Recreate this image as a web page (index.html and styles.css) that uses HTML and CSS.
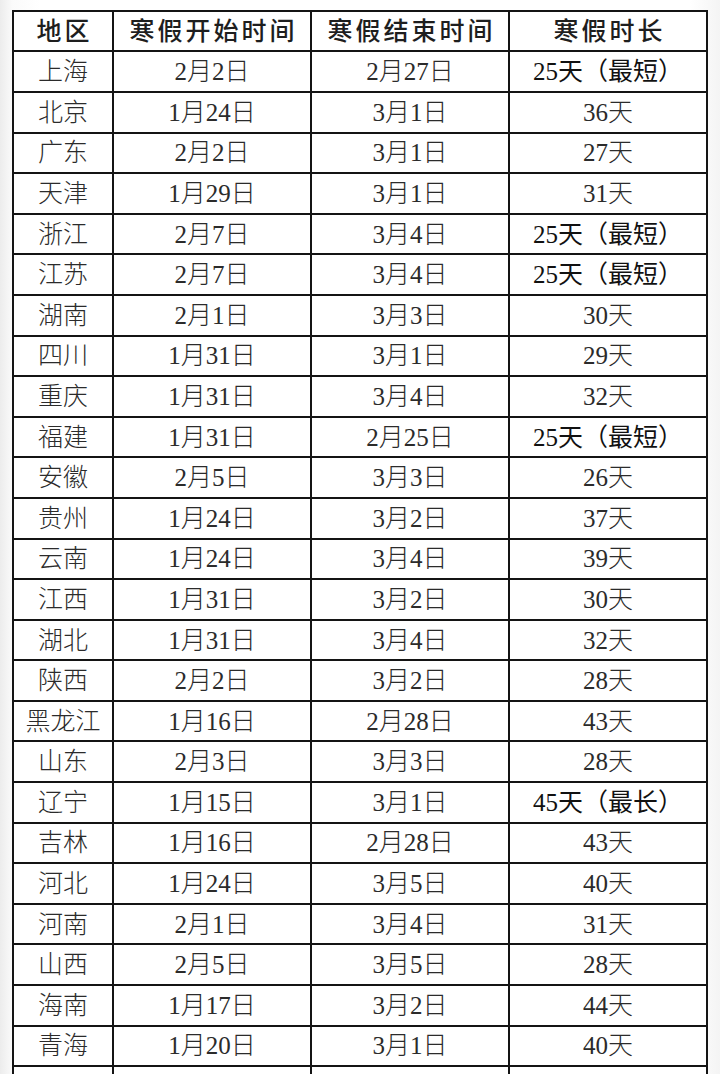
FILE: index.html
```html
<!DOCTYPE html>
<html lang="zh-CN">
<head>
<meta charset="utf-8">
<title>寒假时间表</title>
<link rel="stylesheet" href="styles.css">
</head>
<body>
<div class="page">
<table class="holiday">
<colgroup>
<col class="c-region"><col class="c-date"><col class="c-date"><col class="c-len">
</colgroup>
<thead>
<tr><th>地区</th><th>寒假开始时间</th><th>寒假结束时间</th><th>寒假时长</th></tr>
</thead>
<tbody>
<tr><td>上海</td><td>2月2日</td><td>2月27日</td><td class="em">25天（最短）</td></tr>
<tr><td>北京</td><td>1月24日</td><td>3月1日</td><td>36天</td></tr>
<tr><td>广东</td><td>2月2日</td><td>3月1日</td><td>27天</td></tr>
<tr><td>天津</td><td>1月29日</td><td>3月1日</td><td>31天</td></tr>
<tr><td>浙江</td><td>2月7日</td><td>3月4日</td><td class="em">25天（最短）</td></tr>
<tr><td>江苏</td><td>2月7日</td><td>3月4日</td><td class="em">25天（最短）</td></tr>
<tr><td>湖南</td><td>2月1日</td><td>3月3日</td><td>30天</td></tr>
<tr><td>四川</td><td>1月31日</td><td>3月1日</td><td>29天</td></tr>
<tr><td>重庆</td><td>1月31日</td><td>3月4日</td><td>32天</td></tr>
<tr><td>福建</td><td>1月31日</td><td>2月25日</td><td class="em">25天（最短）</td></tr>
<tr><td>安徽</td><td>2月5日</td><td>3月3日</td><td>26天</td></tr>
<tr><td>贵州</td><td>1月24日</td><td>3月2日</td><td>37天</td></tr>
<tr><td>云南</td><td>1月24日</td><td>3月4日</td><td>39天</td></tr>
<tr><td>江西</td><td>1月31日</td><td>3月2日</td><td>30天</td></tr>
<tr><td>湖北</td><td>1月31日</td><td>3月4日</td><td>32天</td></tr>
<tr><td>陕西</td><td>2月2日</td><td>3月2日</td><td>28天</td></tr>
<tr><td>黑龙江</td><td>1月16日</td><td>2月28日</td><td>43天</td></tr>
<tr><td>山东</td><td>2月3日</td><td>3月3日</td><td>28天</td></tr>
<tr><td>辽宁</td><td>1月15日</td><td>3月1日</td><td class="em">45天（最长）</td></tr>
<tr><td>吉林</td><td>1月16日</td><td>2月28日</td><td>43天</td></tr>
<tr><td>河北</td><td>1月24日</td><td>3月5日</td><td>40天</td></tr>
<tr><td>河南</td><td>2月1日</td><td>3月4日</td><td>31天</td></tr>
<tr><td>山西</td><td>2月5日</td><td>3月5日</td><td>28天</td></tr>
<tr><td>海南</td><td>1月17日</td><td>3月2日</td><td>44天</td></tr>
<tr><td>青海</td><td>1月20日</td><td>3月1日</td><td>40天</td></tr>
<tr><td>&nbsp;</td><td>&nbsp;</td><td>&nbsp;</td><td>&nbsp;</td></tr>
</tbody>
</table>
</div>
</body>
</html>
```
FILE: styles.css
```css
html, body {
  margin: 0;
  padding: 0;
  background: #ffffff;
}
.page {
  width: 720px;
  height: 1074px;
  overflow: hidden;
  padding: 10px 0 0 12px;
  box-sizing: border-box;
  background: linear-gradient(to right, #ececec 0, #fafafa 12px, #ffffff 40px, #ffffff 690px, #f4f4f4 720px);
}
.holiday {
  border-collapse: collapse;
  table-layout: fixed;
  width: 696px;
  font-family: "Liberation Serif", "Noto Sans CJK SC", serif;
  font-size: 25px;
  color: #2b2b2b;
  background: #ffffff;
}
.c-region { width: 100px; }
.c-date { width: 198px; }
.c-len { width: 198px; }
.holiday th,
.holiday td {
  border: 2px solid #141414;
  text-align: center;
  vertical-align: middle;
  padding: 0;
  line-height: 1;
  white-space: nowrap;
}
.holiday th {
  height: 38.4px;
  font-weight: 500;
  letter-spacing: 3px;
  text-indent: 3px;
  color: #1e1e1e;
}
.holiday td {
  height: 38.6px;
  font-weight: 300;
}
.holiday td.em {
  font-weight: 400;
  color: #111111;
}
```
